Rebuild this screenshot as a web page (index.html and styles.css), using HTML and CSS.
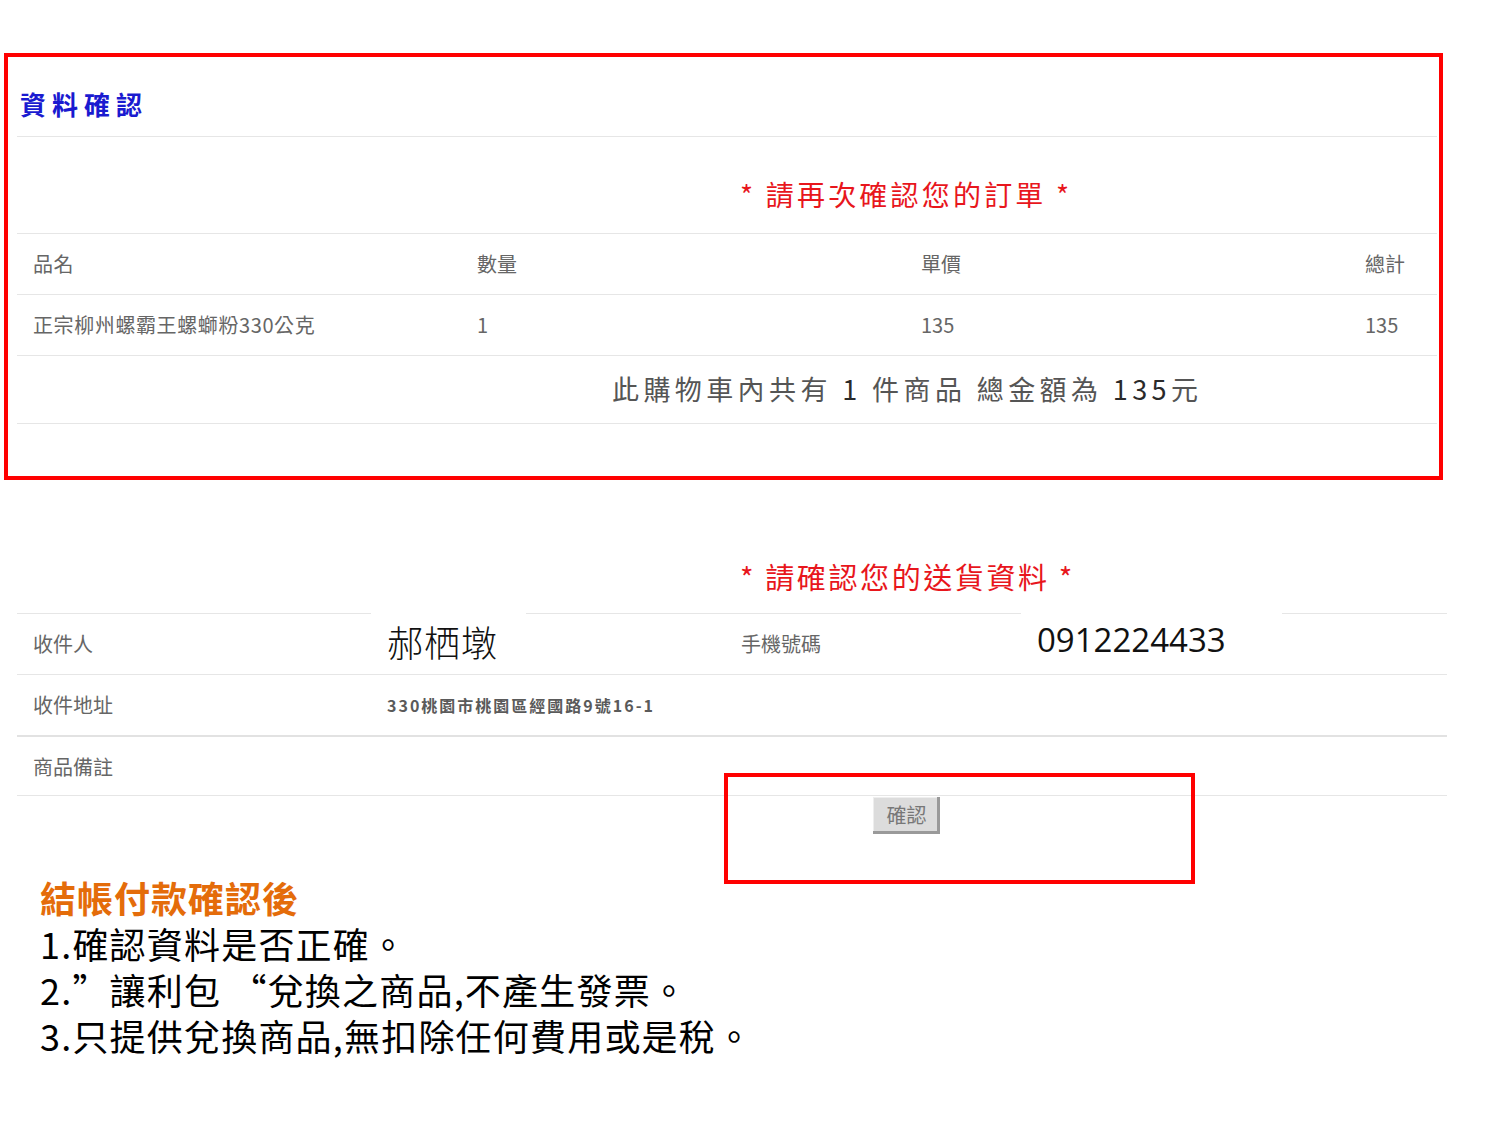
FILE: index.html
```html
<!DOCTYPE html>
<html lang="zh-Hant">
<head>
<meta charset="utf-8">
<title>資料確認</title>
<link rel="stylesheet" href="styles.css">
</head>
<body>
<div class="page">
  <section class="order-box">
    <h2 class="title">資料確認</h2>
    <div class="order">
      <div class="notice notice-order">* 請再次確認您的訂單 *</div>
      <div class="row head">
        <div class="cell">品名</div>
        <div class="cell">數量</div>
        <div class="cell">單價</div>
        <div class="cell">總計</div>
      </div>
      <div class="row">
        <div class="cell">正宗柳州螺霸王螺螄粉330公克</div>
        <div class="cell num">1</div>
        <div class="cell num">135</div>
        <div class="cell num">135</div>
      </div>
      <div class="summary">此購物車內共有 <b>1</b> 件商品 總金額為 <b>135</b>元</div>
    </div>
  </section>

  <section class="ship">
    <div class="notice notice-ship">* 請確認您的送貨資料 *</div>
    <div class="info">
      <div class="irow first">
        <div class="icell lbl">收件人</div>
        <div class="icell val"><span class="paste paste-name">郝栖墩</span></div>
        <div class="icell lbl">手機號碼</div>
        <div class="icell val"><span class="paste paste-phone">0912224433</span></div>
      </div>
      <div class="irow">
        <div class="icell lbl">收件地址</div>
        <div class="icell addr">330桃園市桃園區經國路9號16-1</div>
      </div>
      <div class="irow thick">
        <div class="icell lbl">商品備註</div>
        <div class="icell"></div>
      </div>
    </div>
    <div class="actions"><button class="btn" type="button">確認</button></div>
  </section>

  <div class="notes">
    <div class="notes-head">結帳付款確認後</div>
    <div>1.確認資料是否正確。</div>
    <div>2.”讓利包 “兌換之商品,不產生發票。</div>
    <div>3.只提供兌換商品,無扣除任何費用或是稅。</div>
  </div>

  <div class="mark"></div>
</div>
</body>
</html>
```

FILE: styles.css
```css
* { box-sizing: border-box; }

html, body {
  margin: 0;
  padding: 0;
  background: #fff;
}

body {
  font-family: "Noto Sans CJK TC", "Noto Sans", sans-serif;
  color: #555;
}

.page {
  position: relative;
  width: 1500px;
  height: 1125px;
  padding-top: 53px;
}

/* ---------- order box ---------- */
.order-box {
  margin-left: 4px;
  width: 1439px;
  height: 427px;
  border: 4px solid #f00;
}

.title {
  margin: 0 2px 0 9px;
  padding: 32px 0 17px 3px;
  line-height: 30px;
  font-size: 26px;
  font-weight: 700;
  letter-spacing: 6px;
  color: #1a1ad0;
  border-bottom: 1px solid #e6e6e6;
}

.order {
  margin: 0 2px 0 9px;
}

.notice {
  color: #e8161c;
  font-size: 28px;
  font-weight: 400;
  white-space: nowrap;
  letter-spacing: 3.2px;
}

.notice-order {
  padding: 41px 0 23px 723px;
  line-height: 32px;
  border-bottom: 1px solid #e6e6e6;
}

.row {
  display: grid;
  grid-template-columns: 444px 444px 444px 1fr;
  height: 61px;
  border-bottom: 1px solid #e6e6e6;
  font-size: 20px;
  line-height: 60px;
}

.cell {
  padding-left: 16px;
  white-space: nowrap;
  color: #666;
}

.row .cell:first-child { letter-spacing: 0.6px; }

.summary {
  height: 68px;
  padding-left: 595px;
  line-height: 66px;
  font-size: 27px;
  letter-spacing: 4.4px;
  color: #555;
  white-space: nowrap;
  border-bottom: 1px solid #e6e6e6;
}

.summary b {
  font-weight: 400;
  color: #2a2a2a;
}

/* ---------- shipping ---------- */
.ship {
  margin-left: 17px;
  width: 1430px;
}

.notice-ship {
  padding: 78px 0 18px 723px;
  line-height: 37px;
  font-size: 29px;
  letter-spacing: 2.6px;
}

.irow {
  display: grid;
  grid-template-columns: 354px 354px 296px 1fr;
  height: 61px;
  border-top: 1px solid #e6e6e6;
}

.irow.first {
  border-top: 0;
}

.irow.first .icell {
  border-top: 1px solid #e6e6e6;
}

.irow.thick {
  border-top: 2px solid #e2e2e2;
  height: 61px;
  border-bottom: 1px solid #e6e6e6;
}

.irow:not(.first) .icell.addr { grid-column: 2 / 5; }

.icell {
  padding-left: 16px;
  font-size: 20px;
  line-height: 60px;
  color: #666;
  white-space: nowrap;
}

.icell.val {
  padding-left: 0;
}

.paste {
  display: block;
  margin-top: -4px;
  height: 60px;
  background: #fff;
  padding-left: 16px;
  color: #111;
}

.paste-name {
  width: 155px;
  font-size: 36px;
  font-weight: 300;
  line-height: 62px;
  letter-spacing: 1px;
}

.paste-phone {
  width: 261px;
  font-family: "Open Sans", "Noto Sans", sans-serif;
  font-size: 33px;
  line-height: 60px;
}

.addr {
  font-size: 16px;
  font-weight: 700;
  letter-spacing: 2px;
  color: #5a5a5a;
}

.actions {
  padding: 1px 0 0 856px;
  height: 80px;
}

.btn {
  display: block;
  width: 67px;
  height: 37px;
  padding: 0 0 2px 0;
  border: 0;
  background: #dcdcdc;
  box-shadow: inset -3px -3px 0 #9a9a9a, inset 1px 1px 0 #eee;
  font-family: "Noto Sans CJK TC", sans-serif;
  font-size: 20px;
  color: #777;
  line-height: 35px;
}

/* ---------- notes ---------- */
.notes {
  margin-left: 40px;
  margin-top: -2px;
  font-size: 36px;
  line-height: 46px;
  color: #000;
  font-weight: 400;
  letter-spacing: 1.2px;
  white-space: nowrap;
}

.notes-head {
  font-weight: 700;
  color: #e46c0a;
  letter-spacing: 1px;
}

/* ---------- annotation ---------- */
.mark {
  position: absolute;
  left: 724px;
  top: 773px;
  width: 471px;
  height: 111px;
  border: 4px solid #f00;
}
```
